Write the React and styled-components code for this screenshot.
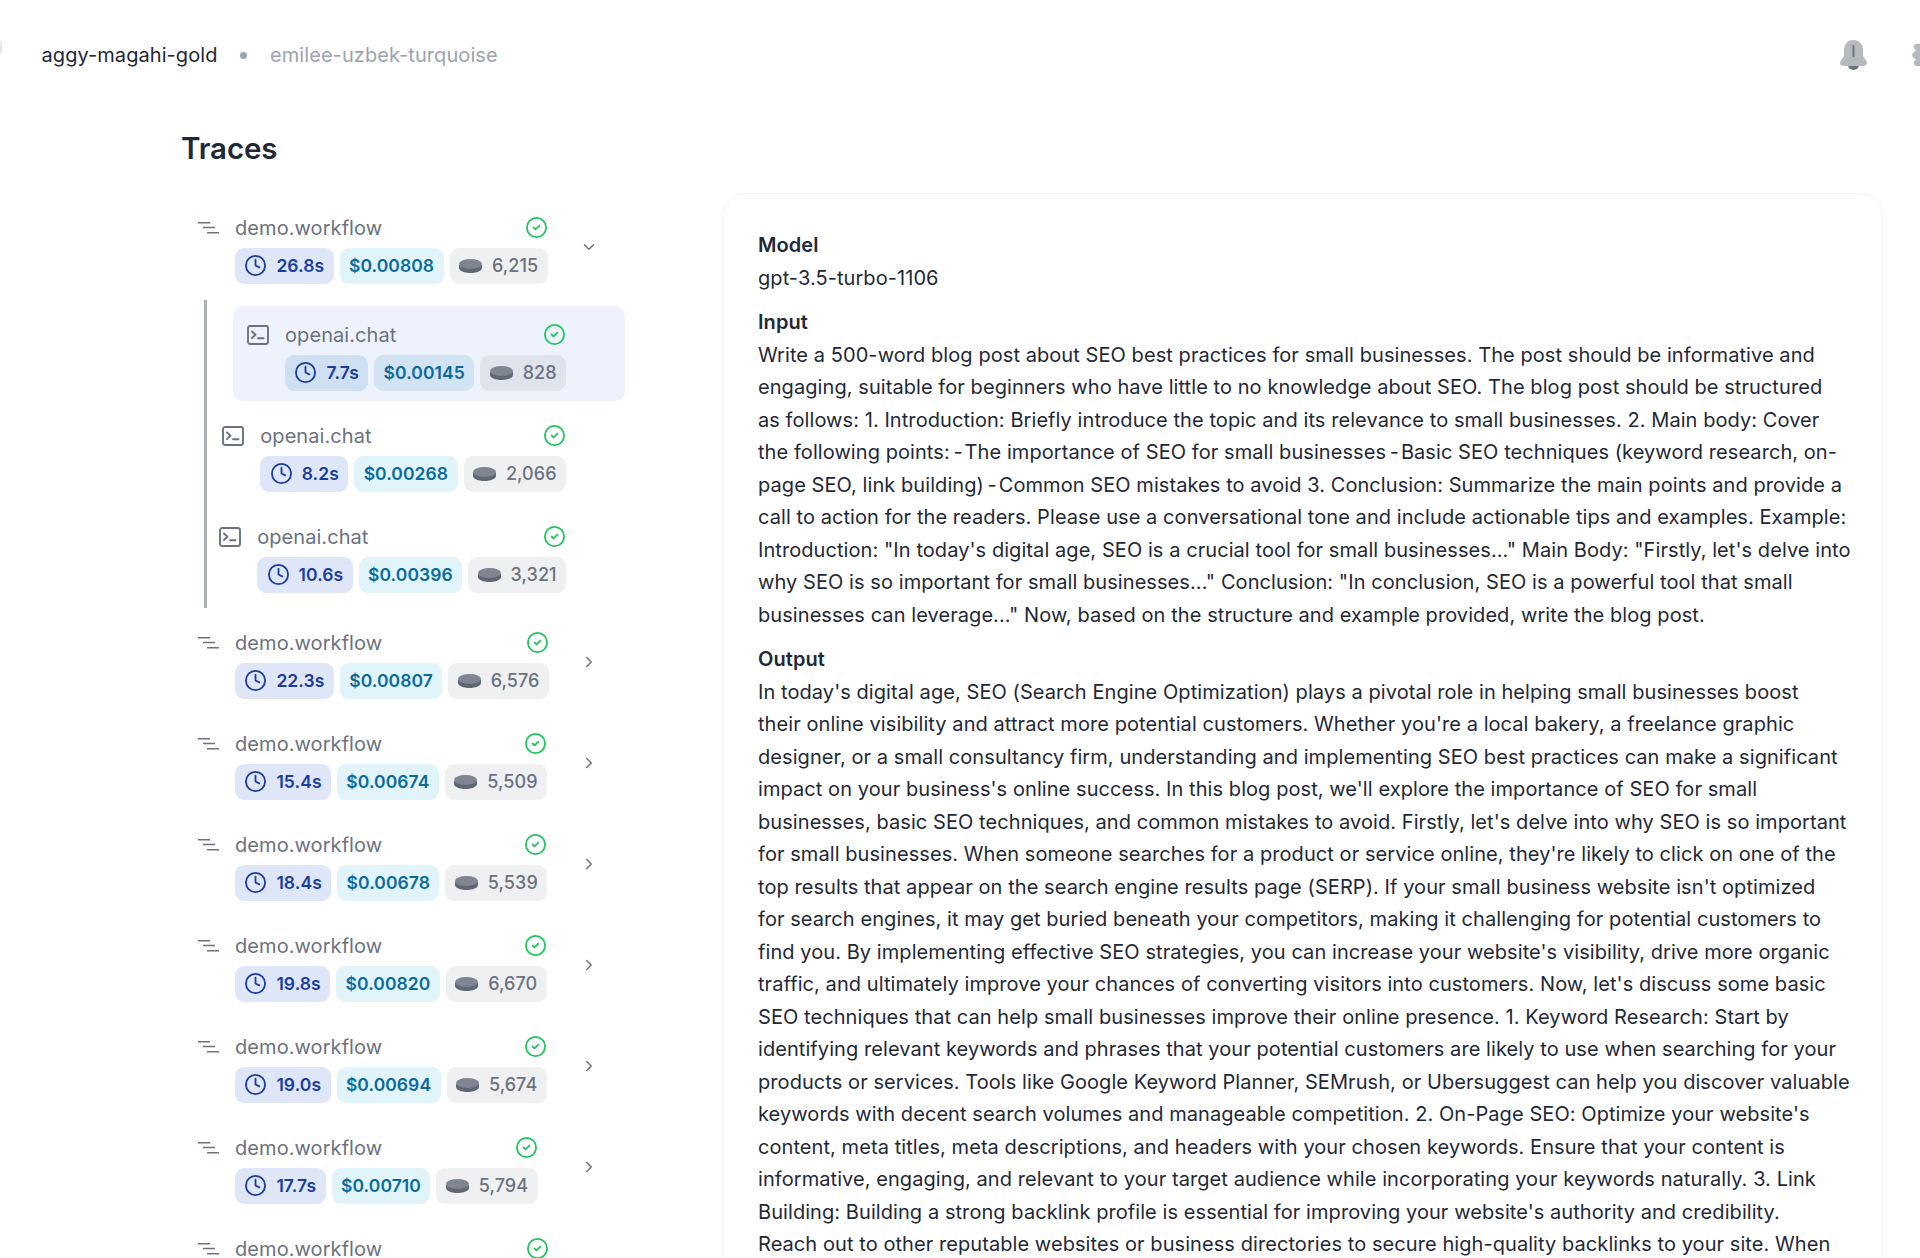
import React from "react";
import styled, { createGlobalStyle } from "styled-components";
import { ChevronDown, ChevronRight, CircleCheck, Clock } from "lucide-react";

const Global = createGlobalStyle`
  html, body { margin: 0; padding: 0; background: #fff; height: 1258px; overflow: hidden; }
  body { font-family: Inter, "Noto Sans", sans-serif; color: #1f2937; letter-spacing: 0.07px; }
`;

const Page = styled.div`
  position: relative;
  width: 1920px;
  height: 1258px;
  overflow: hidden;
`;
const Header = styled.header`
  height: 108px;
  padding: 2px 41.5px 0;
  box-sizing: border-box;
  display: flex;
  align-items: center;
  font-size: 20px;
`;
const Crumb = styled.span`
  color: ${(p) => (p.$muted ? "#9ca3af" : "#1f2937")};
`;
const Dot = styled.span`
  width: 7px;
  height: 7px;
  margin: 0 23px 0 22.5px;
  border-radius: 50%;
  background: #9ca3af;
`;
const HeaderIcons = styled.div`
  margin-left: auto;
  margin-right: -41.5px;
  display: flex;
  gap: 45px;
  align-items: center;
  width: 80px;
  overflow: hidden;
`;
const EdgeMark = styled.span`
  position: absolute;
  left: -3px;
  top: 41px;
  width: 5px;
  height: 13px;
  border-radius: 3px;
  background: #e5e7eb;
`;
const Main = styled.main`
  padding: 0 37px 0 182px;
`;
const Title = styled.h1`
  margin: 20px 0 25px -1px;
  font-size: 29.500px;
  line-height: 40px;
  font-weight: 600;
  letter-spacing: -0.1px;
  color: #1f2937;
`;
const Columns = styled.div`
  display: flex;
  align-items: flex-start;
`;
const Tree = styled.div`
  width: 427px;
  flex: none;
  padding: 5.500px 0 0 16px;
  margin-right: 97px;
  display: flex;
  flex-direction: column;
  gap: 6px;
`;
const Row = styled.div`
  display: flex;
  align-items: flex-start;
  gap: 16px;
  padding: 15px 0 10px;
  border-radius: 10px;
`;
const ChildRow = styled(Row)`
  justify-content: flex-end;
  padding-right: 59px;
  background: ${(p) => (p.$selected ? "#edf2fc" : "transparent")};
`;
const Children = styled.div`
  margin-left: 6px;
  padding: 6px 0 5px 26px;
  border-left: 3px solid #adb0b6;
  display: flex;
  flex-direction: column;
  gap: 6px;
`;
const IconSlot = styled.span`
  height: 28px;
  flex: none;
  display: flex;
  align-items: center;
  color: #6b7280;
`;
const Block = styled.div`
  flex: none;
  min-height: 70px;
  display: flex;
  flex-direction: column;
  gap: 6px;
`;
const TitleLine = styled.div`
  height: 28px;
  display: flex;
  align-items: center;
  justify-content: space-between;
  font-size: 20px;
  color: #6b7280;
`;
const Pills = styled.div`
  display: flex;
  gap: 6px;
`;
const Pill = styled.span`
  height: 36px;
  padding: 0 9.400px;
  box-sizing: border-box;
  display: inline-flex;
  align-items: center;
  gap: 9px;
  border-radius: 9px;
  font-size: 17.5px;
  font-weight: 600;
  white-space: nowrap;
  background: ${(p) => p.$bg};
  color: ${(p) => p.$fg};
`;
const Tokens = styled(Pill)`
  font-weight: 500;
  font-size: 18px;
  gap: 10px;
`;
const Toggle = styled.span`
  margin-left: auto;
  margin-right: 27px;
  margin-bottom: 3px;
  align-self: center;
  display: flex;
  color: #6b7280;
`;
const Card = styled.section`
  flex: 1;
  min-width: 0;
  height: 1200px;
  box-sizing: border-box;
  padding: 35px 35px;
  border: 1px solid #f5f6f7;
  border-radius: 24px;
  box-shadow: 0 1px 6px rgba(17, 24, 39, 0.025);
  font-size: 20px;
  line-height: 32.5px;
`;
const Field = styled.div`
  margin-bottom: 12px;
`;
const Label = styled.div`
  font-weight: 600;
`;
const Text = styled.p`
  margin: 0;
  color: #1f2937;
`;
const Line = styled.span`
  display: block;
  white-space: nowrap;
`;

const TreeIcon = () => (
  <svg width="21" height="12" viewBox="0 0 21 12" fill="none" stroke="currentColor" strokeWidth="1.5">
    <path d="M0 .8h12M5 5.600h12M9 10.800h12" />
  </svg>
);
const TerminalIcon = () => (
  <svg width="22" height="20" viewBox="0 0 22 20" fill="none" stroke="currentColor" strokeWidth="1.900" strokeLinecap="round" strokeLinejoin="round">
    <rect x="1" y="1" width="20" height="18" rx="2.200" />
    <path d="M5 6.500l3.500 3.200L5 13M11 13.200h5.500" />
  </svg>
);
const CoinIcon = () => (
  <svg width="23" height="14" viewBox="0 0 23 14">
    <path d="M0 6v3c0 2.800 5.200 5 11.500 5S23 11.800 23 9V6z" fill="#5f6773" />
    <ellipse cx="11.500" cy="5" rx="11.500" ry="5" fill="#7f8692" />
  </svg>
);
const BellIcon = () => (
  <svg width="27" height="30" viewBox="0 0 27 30" style={{ flex: "none" }}>
    <path d="M8 25h11a5.500 5 0 0 1-11 0z" fill="#6b7280" />
    <path d="M13.500 0C7 0 4 5 4 10v5c0 3-4 5-4 8 0 2 1.500 3 4 3h19c2.500 0 4-1 4-3 0-3-4-5-4-8v-5c0-5-3-10-9.500-10z" fill="#b6b9be" />
    <rect x="12.500" y="5" width="2" height="12" rx="1" fill="#6b7280" />
  </svg>
);
const GearIcon = () => (
  <svg width="20" height="22" viewBox="0 0 20 22" style={{ flex: "none" }}>
    <path d="M4 0h12v22H4a3 3 0 0 1-1-5.500c1-.6 1-1.500 0-2l-1.500-1a3 3 0 0 1 0-5L3 7.500c1-.5 1-1.400 0-2A3 3 0 0 1 4 0z" fill="#b6b9be" />
  </svg>
);

const blue = { $bg: "#dfe6f8", $fg: "#1a3d9e" };
const cyan = { $bg: "#e0f4fa", $fg: "#0b6a9c" };
const gray = { $bg: "#eff0f2", $fg: "#6b7280" };
const blueSel = { $bg: "#cfe0f3", $fg: "#1a3d9e" };
const cyanSel = { $bg: "#d2e4f3", $fg: "#0b6a9c" };
const graySel = { $bg: "#dfe3eb", $fg: "#6b7280" };

const Metrics = ({ time, cost, tokens, selected }) => (
  <Pills>
    <Pill {...(selected ? blueSel : blue)}>
      <Clock size={23} strokeWidth={1.9} />
      {time}
    </Pill>
    <Pill {...(selected ? cyanSel : cyan)}>{cost}</Pill>
    <Tokens {...(selected ? graySel : gray)}>
      <CoinIcon />
      {tokens}
    </Tokens>
  </Pills>
);

const Span = ({ name, width, ...m }) => (
  <Block style={width ? { width } : undefined}>
    <TitleLine>
      {name}
      <CircleCheck size={23} color="#22c55e" strokeWidth={1.9} />
    </TitleLine>
    {m.time && <Metrics {...m} />}
  </Block>
);

const Workflow = ({ open, ...m }) => (
  <Row>
    <IconSlot>
      <TreeIcon />
    </IconSlot>
    <Span name="demo.workflow" {...m} />
    <Toggle>{open ? <ChevronDown size={18} /> : <ChevronRight size={18} />}</Toggle>
  </Row>
);

const Chat = ({ selected, ...m }) => (
  <ChildRow $selected={selected}>
    <IconSlot>
      <TerminalIcon />
    </IconSlot>
    <Span name="openai.chat" selected={selected} {...m} />
  </ChildRow>
);

const workflows = [
  { time: "22.3s", cost: "$0.00807", tokens: "6,576" },
  { time: "15.4s", cost: "$0.00674", tokens: "5,509" },
  { time: "18.4s", cost: "$0.00678", tokens: "5,539" },
  { time: "19.8s", cost: "$0.00820", tokens: "6,670" },
  { time: "19.0s", cost: "$0.00694", tokens: "5,674" },
  { time: "17.7s", cost: "$0.00710", tokens: "5,794" },
  { width: 314 },
];

const INPUT = [
  "Write a 500-word blog post about SEO best practices for small businesses. The post should be informative and",
  "engaging, suitable for beginners who have little to no knowledge about SEO. The blog post should be structured",
  "as follows: 1. Introduction: Briefly introduce the topic and its relevance to small businesses. 2. Main body: Cover",
  "the following points:\u2009-\u200AThe importance of SEO for small businesses\u2009-\u200ABasic SEO techniques (keyword research, on-",
  "page SEO, link building)\u2009-\u200ACommon SEO mistakes to avoid 3. Conclusion: Summarize the main points and provide a",
  "call to action for the readers. Please use a conversational tone and include actionable tips and examples. Example:",
  "Introduction: \"In today's digital age, SEO is a crucial tool for small businesses...\" Main Body: \"Firstly, let's delve into",
  "why SEO is so important for small businesses...\" Conclusion: \"In conclusion, SEO is a powerful tool that small",
  "businesses can leverage...\" Now, based on the structure and example provided, write the blog post.",
];

const OUTPUT = [
  "In today's digital age, SEO (Search Engine Optimization) plays a pivotal role in helping small businesses boost",
  "their online visibility and attract more potential customers. Whether you're a local bakery, a freelance graphic",
  "designer, or a small consultancy firm, understanding and implementing SEO best practices can make a significant",
  "impact on your business's online success. In this blog post, we'll explore the importance of SEO for small",
  "businesses, basic SEO techniques, and common mistakes to avoid. Firstly, let's delve into why SEO is so important",
  "for small businesses. When someone searches for a product or service online, they're likely to click on one of the",
  "top results that appear on the search engine results page (SERP). If your small business website isn't optimized",
  "for search engines, it may get buried beneath your competitors, making it challenging for potential customers to",
  "find you. By implementing effective SEO strategies, you can increase your website's visibility, drive more organic",
  "traffic, and ultimately improve your chances of converting visitors into customers. Now, let's discuss some basic",
  "SEO techniques that can help small businesses improve their online presence. 1. Keyword Research: Start by",
  "identifying relevant keywords and phrases that your potential customers are likely to use when searching for your",
  "products or services. Tools like Google Keyword Planner, SEMrush, or Ubersuggest can help you discover valuable",
  "keywords with decent search volumes and manageable competition. 2. On-Page SEO: Optimize your website's",
  "content, meta titles, meta descriptions, and headers with your chosen keywords. Ensure that your content is",
  "informative, engaging, and relevant to your target audience while incorporating your keywords naturally. 3. Link",
  "Building: Building a strong backlink profile is essential for improving your website's authority and credibility.",
  "Reach out to other reputable websites or business directories to secure high-quality backlinks to your site. When",
];

const Lines = ({ lines }) => (
  <Text>
    {lines.map((l) => (
      <Line key={l}>{l}</Line>
    ))}
  </Text>
);

export default function App() {
  return (
    <Page>
      <Global />
      <EdgeMark />
      <Header>
        <Crumb>aggy-magahi-gold</Crumb>
        <Dot />
        <Crumb $muted>emilee-uzbek-turquoise</Crumb>
        <HeaderIcons>
          <BellIcon />
          <GearIcon />
        </HeaderIcons>
      </Header>
      <Main>
        <Title>Traces</Title>
        <Columns>
          <Tree>
            <Workflow open time="26.8s" cost="$0.00808" tokens="6,215" />
            <Children>
              <Chat selected time="7.7s" cost="$0.00145" tokens="828" />
              <Chat time="8.2s" cost="$0.00268" tokens="2,066" />
              <Chat time="10.6s" cost="$0.00396" tokens="3,321" />
            </Children>
            {workflows.map((w, i) => (
              <Workflow key={i} {...w} />
            ))}
          </Tree>
          <Card>
            <Field>
              <Label>Model</Label>
              <Text>gpt-3.5-turbo-1106</Text>
            </Field>
            <Field>
              <Label>Input</Label>
              <Lines lines={INPUT} />
            </Field>
            <Field>
              <Label>Output</Label>
              <Lines lines={OUTPUT} />
            </Field>
          </Card>
        </Columns>
      </Main>
    </Page>
  );
}
